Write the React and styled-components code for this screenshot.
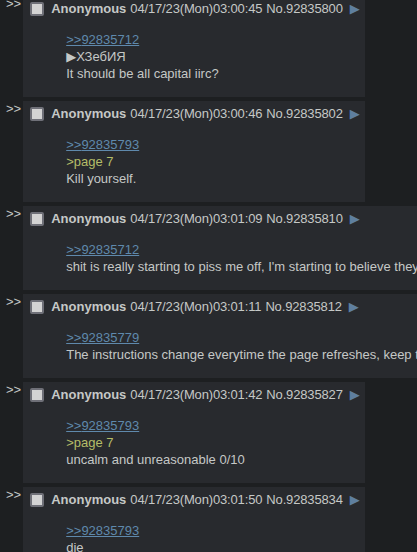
import React from "react";
import styled, { createGlobalStyle } from "styled-components";

const Global = createGlobalStyle`
  html, body {
    margin: 0;
    padding: 0;
    background: #1d1f21;
    overflow: hidden;
  }
  body {
    font-family: "Liberation Sans", Arial, "DejaVu Sans", sans-serif;
    font-size: 13px;
    color: #c5c8c6;
  }
`;

const Thread = styled.div`
  display: flex;
  flex-direction: column;
  gap: 4px;
  margin-top: -4px;
  padding-left: 4px;
`;

const PostContainer = styled.div`
  display: flex;
  align-items: flex-start;
`;

const SideArrows = styled.div`
  margin: 0 2px;
  line-height: 15px;
  color: #c5c8c6;
  flex: none;
`;

const Reply = styled.div`
  flex: none;
  background: #282a2e;
  border: 1px solid #282a2e;
  padding: 2px;
`;

const PostInfo = styled.div`
  display: flex;
  align-items: center;
  height: 19px;
  white-space: nowrap;
`;

const Check = styled.span`
  box-sizing: border-box;
  width: 14px;
  height: 14px;
  margin: 0 7px 0 4px;
  border: 2px solid #6f7078;
  border-radius: 2px;
  background: #d3d3d3;
  flex: none;
`;

const Name = styled.span`
  font-weight: bold;
  color: #c5c8c6;
`;

const DateTime = styled.span`
  margin-left: 4px;
  letter-spacing: -0.15px;
`;

const PostNum = styled.span`
  margin-left: 4px;
  letter-spacing: -0.15px;
`;

const MenuBtn = styled.span`
  margin-left: 7px;
  margin-right: 2px;
  color: #5f7f9e;
  font-family: "DejaVu Sans", sans-serif;
  font-size: 13px;
  line-height: 15px;
`;

const Message = styled.blockquote`
  margin: 13px 40px 12px;
  line-height: 17px;
  white-space: nowrap;
`;

const Line = styled.div`
  color: ${(p) => (p.$green ? "#b5bd68" : "#c5c8c6")};
`;

const QuoteLink = styled.a`
  color: #5f89ac;
  text-decoration: underline;
`;

const posts = [
  { time: "03:00:45", no: "92835800", quote: "92835712", lines: [{ t: "▶ХЗебИЯ" }, { t: "It should be all capital iirc?" }] },
  { time: "03:00:46", no: "92835802", quote: "92835793", lines: [{ t: ">page 7", g: true }, { t: "Kill yourself." }] },
  { time: "03:01:09", no: "92835810", quote: "92835712", lines: [{ t: "shit is really starting to piss me off, I'm starting to believe they are doing it on purpose" }] },
  { time: "03:01:11", no: "92835812", quote: "92835779", lines: [{ t: "The instructions change everytime the page refreshes, keep trying until you get it" }] },
  { time: "03:01:42", no: "92835827", quote: "92835793", lines: [{ t: ">page 7", g: true }, { t: "uncalm and unreasonable 0/10" }] },
  { time: "03:01:50", no: "92835834", quote: "92835793", lines: [{ t: "die" }] },
];

export default function App() {
  return (
    <>
      <Global />
      <Thread>
        {posts.map((p) => (
          <PostContainer key={p.no}>
            <SideArrows>&gt;&gt;</SideArrows>
            <Reply>
              <PostInfo>
                <Check />
                <Name>Anonymous</Name>
                <DateTime>04/17/23(Mon){p.time}</DateTime>
                <PostNum>No.{p.no}</PostNum>
                <MenuBtn>▶</MenuBtn>
              </PostInfo>
              <Message>
                <Line>
                  <QuoteLink href="#">&gt;&gt;{p.quote}</QuoteLink>
                </Line>
                {p.lines.map((l, i) => (
                  <Line key={i} $green={l.g}>
                    {l.t}
                  </Line>
                ))}
              </Message>
            </Reply>
          </PostContainer>
        ))}
      </Thread>
    </>
  );
}
